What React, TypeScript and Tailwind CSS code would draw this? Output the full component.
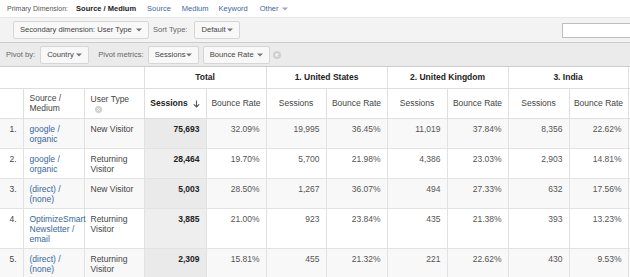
import React from "react";

const Caret = ({ c = "#777" }: { c?: string }) => (
  <svg width="6" height="4" viewBox="0 0 6 4" className="shrink-0">
    <path d="M0 0.5 L6 0.5 L3 3.5 Z" fill={c} />
  </svg>
);

const XCircle = ({ size = 8 }: { size?: number }) => (
  <svg width={size} height={size} viewBox="0 0 8 8" className="shrink-0">
    <circle cx="4" cy="4" r="4" fill="#cfcfcf" />
    <path d="M2.6 2.6 L5.4 5.4 M5.4 2.6 L2.6 5.4" stroke="#fff" strokeWidth="1.1" />
  </svg>
);

const SortArrow = () => (
  <svg width="7" height="8" viewBox="0 0 7 8" className="inline-block ml-[5px] align-middle">
    <path d="M3.5 0.5 V7 M0.8 4.3 L3.5 7 L6.2 4.3" stroke="#555" strokeWidth="1.1" fill="none" />
  </svg>
);

const Btn = ({ label, w }: { label: string; w: string }) => (
  <div
    className={`flex items-center justify-between h-[18px] ${w} px-[6px] border border-[#d6d6d6] rounded-[2px] bg-[#f8f8f8] text-[#444]`}
  >
    <span className="whitespace-nowrap">{label}</span>
    <Caret />
  </div>
);

type Row = {
  n: string;
  src: string[];
  ut: string[];
  vals: string[];
};

const rows: Row[] = [
  { n: "1.", src: ["google /", "organic"], ut: ["New Visitor"], vals: ["75,693", "32.09%", "19,995", "36.45%", "11,019", "37.84%", "8,356", "22.62%"] },
  { n: "2.", src: ["google /", "organic"], ut: ["Returning", "Visitor"], vals: ["28,464", "19.70%", "5,700", "21.98%", "4,386", "23.03%", "2,903", "14.81%"] },
  { n: "3.", src: ["(direct) /", "(none)"], ut: ["New Visitor"], vals: ["5,003", "28.50%", "1,267", "36.07%", "494", "27.33%", "632", "17.56%"] },
  { n: "4.", src: ["OptimizeSmart", "Newsletter /", "email"], ut: ["Returning", "Visitor"], vals: ["3,885", "21.00%", "923", "23.84%", "435", "21.38%", "393", "13.23%"] },
  { n: "5.", src: ["(direct) /", "(none)"], ut: ["Returning", "Visitor"], vals: ["2,309", "15.81%", "455", "21.32%", "221", "22.62%", "430", "9.53%"] },
];

const colW = ["w-[23px]", "w-[61px]", "w-[60px]", "w-[62px]", "w-[60px]", "w-[60px]", "w-[61px]", "w-[60px]", "w-[61px]", "w-[61px]", "w-[59px]", "w-[60px]"];

export default function App() {
  return (
    <div
      className="w-[630px] h-[277px] overflow-hidden bg-white text-[#333]"
      style={{ fontFamily: '"Liberation Sans", Arial, sans-serif' }}
    >
      {/* Primary dimension row */}
      <div className="flex items-center h-[17px] pl-[7px] text-[7.5px] leading-none">
        <span className="text-[#555] text-[7px]">Primary Dimension:</span>
        <span className="ml-[8px] font-bold text-[#222]">Source / Medium</span>
        <span className="ml-[11px] text-[#3b67a8]">Source</span>
        <span className="ml-[11px] text-[#3b67a8]">Medium</span>
        <span className="ml-[10px] text-[#3b67a8]">Keyword</span>
        <span className="ml-[12px] text-[#3b67a8] flex items-center gap-[3px]">
          Other <Caret c="#99a8c8" />
        </span>
      </div>

      {/* Toolbar 1 */}
      <div className="flex items-center h-[26px] pl-[13px] bg-[#f3f3f3] border-t border-[#e6e6e6] border-b border-b-[#cdcdcd] text-[7.6px] overflow-hidden">
        <Btn label="Secondary dimension: User Type" w="w-[136px]" />
        <span className="ml-[4px] text-[#666]">Sort Type:</span>
        <div className="ml-[7px]">
          <Btn label="Default" w="w-[46px]" />
        </div>
        <div className="ml-auto -mr-[2px] w-[70px] h-[15px] bg-white border border-[#bdbdbd]" />
      </div>

      {/* Toolbar 2 */}
      <div className="flex items-center h-[24px] pl-[6px] bg-[#ebebeb] border-b border-[#cdcdcd] text-[7.6px]">
        <span className="text-[#666]">Pivot by:</span>
        <div className="ml-[5px]">
          <Btn label="Country" w="w-[49px]" />
        </div>
        <span className="ml-[9px] text-[#666]">Pivot metrics:</span>
        <div className="ml-[4px]">
          <Btn label="Sessions" w="w-[51px]" />
        </div>
        <div className="ml-[4px]">
          <Btn label="Bounce Rate" w="w-[67px]" />
        </div>
        <div className="ml-[3px]">
          <XCircle />
        </div>
      </div>

      {/* Table */}
      <table className="table-fixed border-collapse w-[688px] text-[8.5px] leading-[10px]">
        <colgroup>
          {colW.map((w, i) => (
            <col key={i} className={w} />
          ))}
        </colgroup>
        <thead>
          <tr className="h-[21px]">
            <th colSpan={3} className="border-r border-b border-[#dedede]" />
            {["Total", "1. United States", "2. United Kingdom", "3. India", ""].map((t, i) => (
              <th
                key={i}
                colSpan={2}
                className="border-r border-b border-[#dedede] text-center font-bold text-[#222] whitespace-nowrap"
              >
                {t}
              </th>
            ))}
          </tr>
          <tr className="h-[30px]">
            <th className="border-r border-b border-[#dedede]" />
            <th className="border-r border-b border-[#dedede] text-left font-normal px-[6px] text-[#444]">
              Source /<br />
              Medium
            </th>
            <th className="border-r border-b border-[#dedede] text-left font-normal px-[6px] text-[#444]">
              <div>User Type</div>
              <div className="mt-[2px] ml-[4px]">
                <XCircle size={7} />
              </div>
            </th>
            <th className="border-r border-b border-[#dedede] text-center font-bold text-[#222] whitespace-nowrap">
              Sessions
              <SortArrow />
            </th>
            <th className="border-r border-b border-[#dedede] text-center font-normal text-[#444] whitespace-nowrap">Bounce Rate</th>
            {[0, 1, 2].map((i) => (
              <React.Fragment key={i}>
                <th className="border-r border-b border-[#dedede] text-center font-normal text-[#444] whitespace-nowrap">Sessions</th>
                <th className="border-r border-b border-[#dedede] text-center font-normal text-[#444] whitespace-nowrap">Bounce Rate</th>
              </React.Fragment>
            ))}
            <th className="border-r border-b border-[#dedede]" />
            <th className="border-r border-b border-[#dedede]" />
          </tr>
        </thead>
        <tbody>
          {rows.map((r, ri) => {
            const odd = ri % 2 === 0;
            const bg = odd ? "bg-[#f8f8f8]" : "bg-white";
            const cell = `border-r border-b border-[#e2e2e2] align-top pt-[5px] pb-[4px] ${bg}`;
            return (
              <tr key={ri}>
                <td className={`${cell} text-right pr-[6px] text-[#444]`}>{r.n}</td>
                <td className={`${cell} pl-[6px] text-[#35679d] whitespace-nowrap`}>
                  {r.src.map((s, i) => (
                    <div key={i}>{s}</div>
                  ))}
                </td>
                <td className={`${cell} pl-[6px] text-[#444] whitespace-nowrap`}>
                  {r.ut.map((s, i) => (
                    <div key={i}>{s}</div>
                  ))}
                </td>
                {r.vals.map((v, i) => (
                  <td
                    key={i}
                    className={`border-r border-b border-[#e2e2e2] align-top pt-[5px] pb-[4px] text-right pr-[6px] whitespace-nowrap ${
                      i === 0
                        ? `font-bold text-[#222] ${odd ? "bg-[#eaeaea]" : "bg-[#eeeeee]"}`
                        : `text-[#555] ${bg}`
                    }`}
                  >
                    {v}
                  </td>
                ))}
                <td className={`${cell}`} />
                <td className={`${cell}`} />
              </tr>
            );
          })}
        </tbody>
      </table>
    </div>
  );
}
